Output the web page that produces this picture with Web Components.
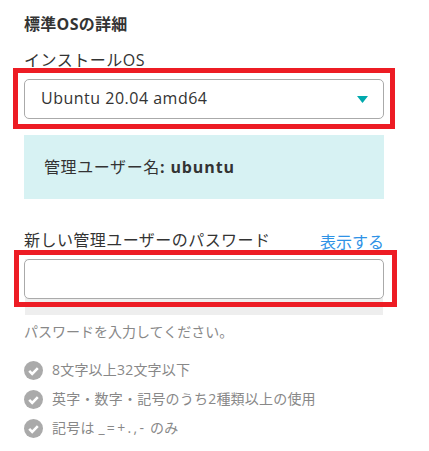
<!DOCTYPE html>
<html lang="ja">
<head>
<meta charset="utf-8">
<style>
html, body {
    margin: 0;
    background: #fff;
}
body {
    font-family: "Open Sans", "Noto Sans CJK JP", sans-serif;
    color: #333;
}
</style>
</head>
<body>
<os-details>
    <os-select slot="os" label="インストールOS" value="Ubuntu 20.04 amd64"></os-select>
    <admin-note slot="note" user="ubuntu">管理ユーザー名</admin-note>
    <password-field slot="password" label="新しい管理ユーザーのパスワード" toggle="表示する" hint="パスワードを入力してください。"></password-field>
    <rule-item slot="rules">8文字以上32文字以下</rule-item>
    <rule-item slot="rules">英字・数字・記号のうち2種類以上の使用</rule-item>
    <rule-item slot="rules">記号は <span style="letter-spacing: 2.3px">_=+.,-</span> のみ</rule-item>
</os-details>

<script>
class OsDetails extends HTMLElement {
    constructor() {
        super();
        this.attachShadow({mode: "open"});
        this.shadowRoot.innerHTML = `
<style>
:host {
    display: block;
    width: 360px;
    padding: 13px 0 0 24px;
}
h2 {
    margin: 0 0 13px 0;
    font-size: 16px;
    line-height: 22px;
    letter-spacing: .3px;
    font-weight: 700;
}
#rules {
    display: flex;
    flex-flow: column nowrap;
    margin-top: 14px;
}
</style>
<h2>標準OSの詳細</h2>
<slot name="os"></slot>
<slot name="note"></slot>
<slot name="password"></slot>
<div id="rules"><slot name="rules"></slot></div>
`;
    }
}

class OsSelect extends HTMLElement {
    constructor() {
        super();
        this.attachShadow({mode: "open"});
        this.shadowRoot.innerHTML = `
<style>
:host {
    display: block;
    position: relative;
}
label {
    display: block;
    font-size: 16px;
    line-height: 24px;
    letter-spacing: .5px;
    margin-bottom: 7px;
}
#box {
    display: flex;
    flex-flow: row nowrap;
    justify-content: space-between;
    align-items: center;
    box-sizing: border-box;
    height: 40px;
    padding: 0 15px 0 16px;
    border: 1px solid #aaa;
    border-radius: 5px;
    font-size: 16px;
    letter-spacing: .5px;
}
#value {
    margin-bottom: 2px;
}
svg {
    width: 11px;
    height: 7px;
    margin-top: 1px;
    flex: none;
}
red-mark {
    left: -11px;
    right: -11px;
    top: 20px;
    height: 61px;
}
</style>
<label></label>
<div id="box"><span id="value"></span><svg viewBox="0 0 11 7"><path d="M0 0h11L5.5 7z" fill="#00a9ad"/></svg></div>
<red-mark></red-mark>
`;
    }

    connectedCallback() {
        this.shadowRoot.querySelector('label').textContent = this.getAttribute('label');
        this.shadowRoot.querySelector('#value').textContent = this.getAttribute('value');
    }
}

class AdminNote extends HTMLElement {
    constructor() {
        super();
        this.attachShadow({mode: "open"});
        this.shadowRoot.innerHTML = `
<style>
:host {
    display: flex;
    align-items: center;
    box-sizing: border-box;
    height: 64px;
    margin-top: 16px;
    padding: 0 0 3px 20px;
    background-color: #d7f2f3;
    font-size: 16px;
    letter-spacing: .6px;
}
b {
    white-space: pre;
    letter-spacing: .9px;
}
</style>
<span><slot></slot><b id="user"></b></span>
`;
    }

    connectedCallback() {
        this.shadowRoot.querySelector('#user').textContent = ': ' + this.getAttribute('user');
    }
}

class PasswordField extends HTMLElement {
    constructor() {
        super();
        this.attachShadow({mode: "open"});
        this.shadowRoot.innerHTML = `
<style>
:host {
    display: block;
    position: relative;
    margin-top: 28px;
}
#head {
    display: flex;
    flex-flow: row nowrap;
    justify-content: space-between;
    font-size: 16px;
    line-height: 24px;
    height: 32px;
}
#label {
    padding-top: 1px;
    letter-spacing: .45px;
}
a {
    color: #2e92e6;
    padding-top: 3px;
}
#wrap {
    margin: 0 1px;
    height: 56px;
    background-color: #eee;
}
#input {
    box-sizing: border-box;
    height: 40px;
    margin: 0 -1px;
    background-color: #fff;
    border: 1px solid #aaa;
    border-radius: 5px;
}
#hint {
    margin-top: 7px;
    font-size: 14px;
    line-height: 20px;
    color: #888;
}
red-mark {
    left: -10px;
    right: -13px;
    top: 23px;
    height: 57px;
}
</style>
<div id="head"><span id="label"></span><a id="toggle"></a></div>
<div id="wrap"><div id="input"></div></div>
<div id="hint"></div>
<red-mark></red-mark>
`;
    }

    connectedCallback() {
        this.shadowRoot.querySelector('#label').textContent = this.getAttribute('label');
        this.shadowRoot.querySelector('#toggle').textContent = this.getAttribute('toggle');
        this.shadowRoot.querySelector('#hint').textContent = this.getAttribute('hint');
    }
}

class RuleItem extends HTMLElement {
    constructor() {
        super();
        this.attachShadow({mode: "open"});
        this.shadowRoot.innerHTML = `
<style>
:host {
    display: flex;
    flex-flow: row nowrap;
    align-items: center;
    gap: 9px;
    height: 29px;
    font-size: 14px;
    letter-spacing: .2px;
    color: #888;
}
svg {
    width: 19px;
    height: 19px;
    flex: none;
}
span {
    margin-bottom: 3px;
}
</style>
<svg viewBox="0 0 19 19"><circle cx="9.5" cy="9.5" r="9.5" fill="#aaa"/><path d="M5.2 9.8l3 3 5.6-5.6" fill="none" stroke="#fff" stroke-width="2.6"/></svg>
<span><slot></slot></span>
`;
    }
}

// the red frames drawn over the screenshot
class RedMark extends HTMLElement {
    constructor() {
        super();
        this.attachShadow({mode: "open"});
        this.shadowRoot.innerHTML = `
<style>
:host {
    display: block;
    position: absolute;
    box-sizing: border-box;
    border: 5px solid #ed1c24;
}
</style>
`;
    }
}

customElements.define("os-details", OsDetails);
customElements.define("os-select", OsSelect);
customElements.define("admin-note", AdminNote);
customElements.define("password-field", PasswordField);
customElements.define("rule-item", RuleItem);
customElements.define("red-mark", RedMark);
</script>
</body>
</html>
